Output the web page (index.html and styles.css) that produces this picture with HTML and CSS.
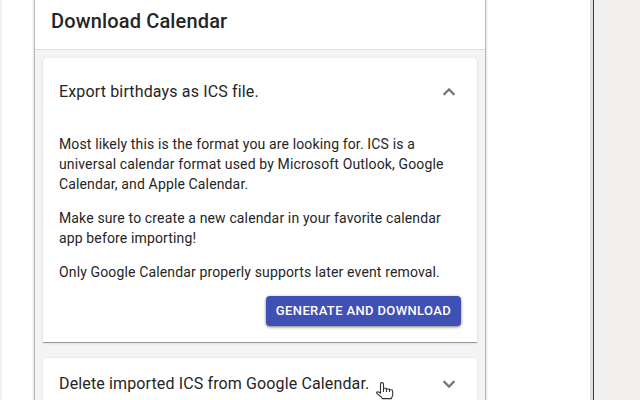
FILE: index.html
```html
<!DOCTYPE html>
<html lang="en">
<head>
<meta charset="utf-8">
<title>Download Calendar</title>
<link rel="stylesheet" href="styles.css">
</head>
<body>
<main class="page">
  <section class="dialog">
    <header class="header"><h1>Download Calendar</h1></header>
    <div class="content">
      <article class="panel">
        <div class="summary expanded"><span>Export birthdays as ICS file.</span>
          <svg class="chevron" viewBox="0 0 24 24"><path d="M12 8l-6 6 1.41 1.41L12 10.83l4.59 4.58L18 14z"/></svg></div>
        <div class="details">
          <p>Most likely this is the format you are looking for. ICS is a<br>universal calendar format used by Microsoft Outlook, Google<br>Calendar, and Apple Calendar.</p>
          <p>Make sure to create a new calendar in your favorite calendar<br>app before importing!</p>
          <p>Only Google Calendar properly supports later event removal.</p>
          <button class="download">GENERATE AND DOWNLOAD</button>
        </div>
      </article>
      <article class="panel last">
        <div class="summary"><span>Delete imported ICS from Google Calendar.</span>
          <svg class="chevron" viewBox="0 0 24 24"><path d="M16.59 8.59L12 13.17 7.41 8.59 6 10l6 6 6-6z"/></svg></div>
      </article>
    </div>
  </section>
</main>
<aside class="side"></aside>
<svg class="cursor" viewBox="0 0 18 18"><path d="M4.5 11V2.3c0-2.3 3-2.3 3 0v3.9h2.3q.8 0 .8.8h2.2q.8 0 .8.8h1.6q1.5 0 1.5 1.6v3.4c0 2-1.2 2.5-1.4 3.8H6.4c-.7-2-3.4-3.2-5.1-4.7C-.2 10.5 1 9.3 2.6 9.9z"/><path d="M7.5 6.2V10m3-3v3m3-2.2V10"/></svg>
</body>
</html>
```
FILE: styles.css
```css
* { box-sizing: border-box; }
body { margin: 0; width: 640px; height: 400px; overflow: hidden; display: flex; background: #fff; font-family: Roboto, sans-serif; color: #252525; }
.page { width: 593px; height: 400px; padding-left: 33px; overflow: hidden; border-left: 2px solid #f0f0f0; border-right: 3px solid #dde1e6; }
.dialog { width: 450px; height: 400px; background: #f4f4f4; box-shadow: 0 0 0 1px #b8b8b8, 0 0 3px 1px #ccc; }
.header { height: 50px; padding: 9px 16px; background: #fff; border-bottom: 1px solid #dedede; }
h1 { margin: 0; font-size: 20px; line-height: 24px; font-weight: 500; letter-spacing: .15px; }
.content { display: grid; gap: 16px; padding: 8px 8px 0; }
.panel { height: 284px; background: #fff; box-shadow: 0 1px 0 #999, 0 1px 3px rgba(0, 0, 0, .15); border-radius: 4px 4px 0 0; }
.panel.last { height: 42px; border-radius: 0; box-shadow: 0 0 2px rgba(0, 0, 0, .1); }
.summary { display: flex; align-items: center; justify-content: space-between; height: 50px; padding: 0 16px; font-size: 16px; letter-spacing: .13px; }
.summary.expanded { height: 66px; letter-spacing: .15px; }
.chevron { width: 24px; height: 24px; margin-top: 2px; fill: #757575; stroke: #757575; stroke-width: .35; }
.details { height: 218px; padding: 10px 16px 16px; display: flex; flex-direction: column; }
p { margin: 0 0 14px; font-size: 14px; line-height: 20px; letter-spacing: .14px; white-space: nowrap; }
.download { align-self: flex-end; width: 195px; height: 30px; margin-top: 0; padding: 0 0 1px; border: 0; border-radius: 4px; color: #fff; background: #3f51b5; box-shadow: 0 1px 3px #777; font: 500 13px Roboto, sans-serif; letter-spacing: .37px; }
.side { width: 47px; background: #f1f0ee; border-left: 1px solid #3b3b40; }
.cursor { position: absolute; left: 376px; top: 382px; width: 18px; height: 18px; fill: #fff; stroke: #333; stroke-width: 1.1; }
```
